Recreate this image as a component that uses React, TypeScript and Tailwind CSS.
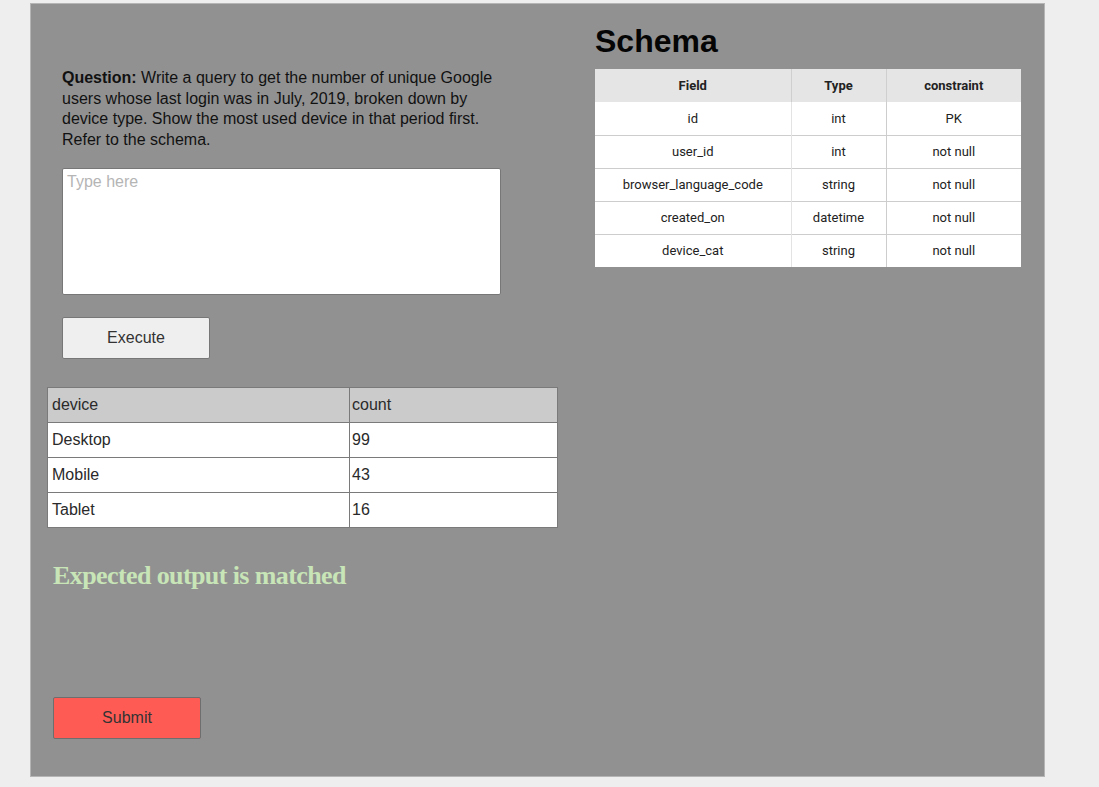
import { useState } from 'react';

const schemaRows = [
  { field: 'id', type: 'int', constraint: 'PK' },
  { field: 'user_id', type: 'int', constraint: 'not null' },
  { field: 'browser_language_code', type: 'string', constraint: 'not null' },
  { field: 'created_on', type: 'datetime', constraint: 'not null' },
  { field: 'device_cat', type: 'string', constraint: 'not null' },
];

const results = [
  { device: 'Desktop', count: 99 },
  { device: 'Mobile', count: 43 },
  { device: 'Tablet', count: 16 },
];

const App = () => {
  const [query, setQuery] = useState('');

  return (
    <div className="min-h-screen bg-[#eeeeee] pt-[3px] pl-[30px] font-['Liberation_Sans',Arial,sans-serif]">
      <div className="flex w-[1015px] h-[774px] bg-[#919191] border border-[#b5b5b5]">
        {/* Left side: question + editor + result */}
        <div className="w-[564px] flex flex-col">
          <p className="ml-[31px] mt-[64px] w-[440px] text-[16px] leading-[20.5px] text-[#111]">
            <b>Question:</b> Write a query to get the number of unique Google users whose last login was in July, 2019, broken down by device type. Show the most used device in that period first. Refer to the schema.
          </p>

          <textarea
            value={query}
            onChange={(e) => setQuery(e.target.value)}
            placeholder="Type here"
            className="ml-[31px] mt-[18px] w-[439px] h-[127px] bg-white border border-[#777] rounded-[2px] px-[4px] py-[1px] text-[16px] text-[#222] placeholder:text-[#b5b5b5] resize-none outline-none"
          />

          <button className="ml-[31px] mt-[22px] w-[148px] h-[42px] bg-[#efefef] border border-[#777] rounded-[2px] text-[16px] text-[#333]">
            Execute
          </button>

          {/* Result table */}
          <table className="ml-[16px] mt-[28px] w-[511px] border-collapse text-[16px] text-[#2a2a2a]">
            <thead>
              <tr className="h-[35px] bg-[#cbcbcb]">
                <th className="w-[302px] border border-[#7a7a7a] px-[4px] text-left font-normal">device</th>
                <th className="border border-[#7a7a7a] px-[2px] text-left font-normal">count</th>
              </tr>
            </thead>
            <tbody>
              {results.map((r) => (
                <tr key={r.device} className="h-[35px] bg-white">
                  <td className="border border-[#7a7a7a] px-[4px]">{r.device}</td>
                  <td className="border border-[#7a7a7a] px-[2px]">{r.count}</td>
                </tr>
              ))}
            </tbody>
          </table>

          <h2 className="ml-[22px] mt-[32px] text-[26px] leading-[31px] font-bold tracking-[-0.6px] text-[#c8e5b7] font-['Liberation_Serif',serif]">
            Expected output is matched
          </h2>

          <button className="ml-[22px] mt-[106px] w-[148px] h-[42px] bg-[#ff5b55] border border-[#6e6e6e] rounded-[2px] text-[16px] text-[#333]">
            Submit
          </button>
        </div>

        {/* Right side: schema */}
        <div className="flex flex-col">
          <h1 className="mt-[19px] text-[32px] leading-[37px] font-bold text-[#050505]">Schema</h1>
          <table className="mt-[9px] w-[426px] border-collapse text-[13px] text-[#222] font-['Roboto','Liberation_Sans',sans-serif]">
            <thead>
              <tr className="h-[33px] bg-[#e5e5e5]">
                <th className="w-[196px] border-r border-[#cfcfcf] font-bold">Field</th>
                <th className="w-[95px] border-r border-[#cfcfcf] font-bold">Type</th>
                <th className="font-bold">constraint</th>
              </tr>
            </thead>
            <tbody>
              {schemaRows.map((row, i) => (
                <tr key={row.field} className={`h-[33px] bg-white ${i < schemaRows.length - 1 ? 'border-b border-[#cdcdcd]' : ''}`}>
                  <td className="border-r border-[#e3e3e3] text-center">{row.field}</td>
                  <td className="border-r border-[#cdcdcd] text-center">{row.type}</td>
                  <td className="text-center">{row.constraint}</td>
                </tr>
              ))}
            </tbody>
          </table>
        </div>
      </div>
    </div>
  );
};

export default App;
